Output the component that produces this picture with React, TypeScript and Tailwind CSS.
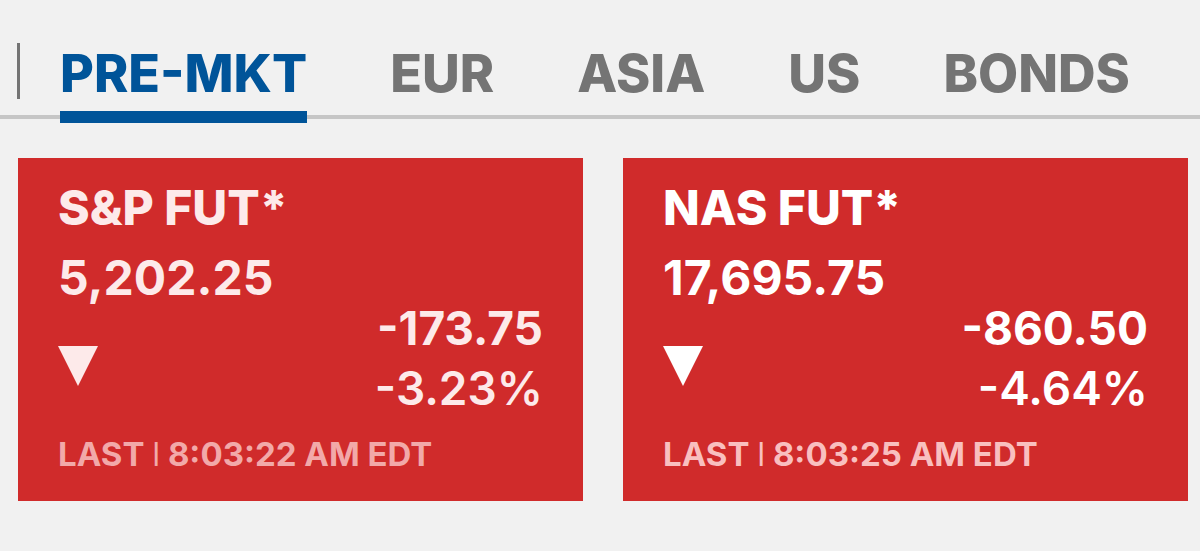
const tabs = ["PRE-MKT", "EUR", "ASIA", "US", "BONDS"];

const quotes = [
  {
    name: "S&P FUT*",
    last: "5,202.25",
    change: "-173.75",
    percent: "-3.23%",
    time: "8:03:22 AM EDT",
    card: "text-[#fdeaea]",
    stamp: "text-[#f2a9a9]",
  },
  {
    name: "NAS FUT*",
    last: "17,695.75",
    change: "-860.50",
    percent: "-4.64%",
    time: "8:03:25 AM EDT",
    card: "text-white",
    stamp: "text-[#f9bfbf]",
  },
];

function MarketTabs() {
  return (
    <nav className="flex h-[87px] items-start border-b-4 border-[#c6c6c6] pl-[17px]">
      <span className="mt-[11px] mr-10 h-14 w-[3px] shrink-0 bg-[#747474]"></span>
      <div className="flex gap-[83px]">
        {tabs.map((tab, i) => (
          <button
            key={tab}
            type="button"
            className={
              i === 0
                ? "h-[91px] border-b-12 border-[#005499] pt-1 text-[52px] leading-[72px] font-extrabold text-[#005499]"
                : "h-[91px] border-b-12 border-transparent pt-1 text-[52px] leading-[72px] font-extrabold text-[#747474]"
            }
          >
            {tab}
          </button>
        ))}
      </div>
    </nav>
  );
}

function QuoteCard({ quote }: { quote: (typeof quotes)[number] }) {
  return (
    <article className={`bg-[#d02b2b] px-10 pt-6 pb-[27px] ${quote.card}`}>
      <h2 className="text-[48px] leading-[52px] font-extrabold">{quote.name}</h2>
      <p className="mt-5 text-[48px] leading-[48px] font-bold">{quote.last}</p>
      <div className="flex items-center justify-between">
        <svg viewBox="0 0 40 40" className="mt-4 size-10" fill="currentColor" aria-hidden="true">
          <path d="M0 0H40L20 40Z" />
        </svg>
        <div className="flex flex-col gap-2 text-right text-[46px] leading-[52px]">
          <p className="font-bold">{quote.change}</p>
          <p className="font-semibold">{quote.percent}</p>
        </div>
      </div>
      <p className={`mt-5 flex items-center gap-2 text-[33px] leading-[40px] font-bold ${quote.stamp}`}>
        <span>LAST</span>
        <span className="text-[20px]">|</span>
        <span>{quote.time}</span>
      </p>
    </article>
  );
}

export default function App() {
  return (
    <main className="min-h-screen bg-[#f1f1f1] pt-8 font-['Inter',sans-serif]">
      <MarketTabs />
      <section className="grid grid-cols-2 gap-10 pt-[39px] pr-3 pl-[18px]">
        {quotes.map((quote) => (
          <QuoteCard key={quote.name} quote={quote} />
        ))}
      </section>
    </main>
  );
}
